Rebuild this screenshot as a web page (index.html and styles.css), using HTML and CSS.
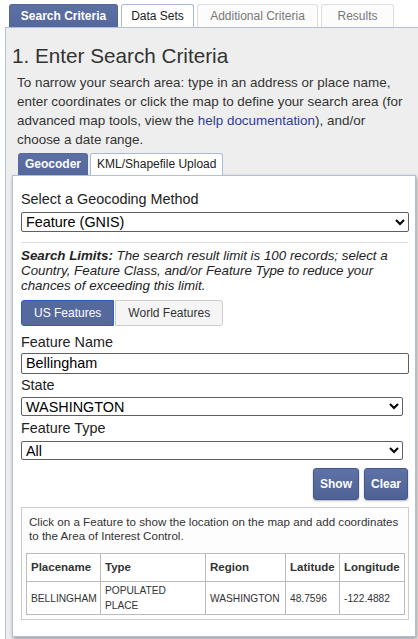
FILE: index.html
```html
<!DOCTYPE html>
<html lang="en">
<head>
<meta charset="utf-8">
<title>Enter Search Criteria</title>
<link rel="stylesheet" href="styles.css">
</head>
<body>
<div class="page">
  <nav class="tabs">
    <span class="tab tab-active tab-search">Search Criteria</span>
    <span class="tab tab-open tab-data">Data Sets</span>
    <span class="tab tab-disabled tab-additional">Additional Criteria</span>
    <span class="tab tab-disabled tab-results">Results</span>
  </nav>
  <section class="panel">
    <h1 class="title">1. Enter Search Criteria</h1>
    <p class="intro">To narrow your search area: type in an address or place name, enter coordinates or click the map to define your search area (for advanced map tools, view the <a class="link" href="#">help documentation</a>), and/or choose a date range.</p>
    <div class="subtabs">
      <span class="subtab subtab-active">Geocoder</span>
      <span class="subtab">KML/Shapefile Upload</span>
    </div>
    <div class="card">
      <div class="field">
        <label class="field-label">Select a Geocoding Method</label>
        <select class="select select-method"><option>Feature (GNIS)</option></select>
      </div>
      <hr class="divider">
      <p class="limits"><b>Search Limits:</b> The search result limit is 100 records; select a Country, Feature Class, and/or Feature Type to reduce your chances of exceeding this limit.</p>
      <div class="seg-group">
        <button class="seg seg-active" type="button">US Features</button>
        <button class="seg seg-plain" type="button">World Features</button>
      </div>
      <div class="field field-name">
        <label class="field-label">Feature Name</label>
        <input class="text-input" type="text" value="Bellingham">
      </div>
      <div class="field field-state">
        <label class="field-label">State</label>
        <select class="select select-narrow"><option>WASHINGTON</option></select>
      </div>
      <div class="field field-type">
        <label class="field-label">Feature Type</label>
        <select class="select select-narrow"><option>All</option></select>
      </div>
      <div class="actions">
        <button class="action" type="button">Show</button>
        <button class="action" type="button">Clear</button>
      </div>
      <div class="results">
        <p class="results-note">Click on a Feature to show the location on the map and add coordinates to the Area of Interest Control.</p>
        <table class="results-table">
          <thead>
            <tr>
              <th class="col-place">Placename</th>
              <th class="col-type">Type</th>
              <th class="col-region">Region</th>
              <th class="col-lat">Latitude</th>
              <th class="col-lon">Longitude</th>
            </tr>
          </thead>
          <tbody>
            <tr>
              <td>BELLINGHAM</td>
              <td class="cell-type">POPULATED PLACE</td>
              <td>WASHINGTON</td>
              <td>48.7596</td>
              <td>-122.4882</td>
            </tr>
          </tbody>
        </table>
      </div>
    </div>
  </section>
</div>
</body>
</html>
```
FILE: styles.css
```css
html, body {
  margin: 0;
  padding: 0;
  overflow: hidden;
  background: #ffffff;
}

body {
  font-family: "Liberation Sans", Arial, sans-serif;
  color: #333333;
}

.page {
  padding: 4px 0 0 5px;
}

/* top tabs */
.tabs {
  display: flex;
  gap: 3px;
  padding-left: 4px;
  height: 23px;
}

.tab {
  box-sizing: border-box;
  height: 23px;
  line-height: 22px;
  font-size: 12px;
  text-align: center;
  border: 1px solid #dddddd;
  border-bottom: none;
  border-radius: 3px 3px 0 0;
  background: #fcfcfc;
  color: #777777;
}

.tab-search { width: 109px; }
.tab-data { width: 73px; }
.tab-additional { width: 121px; }
.tab-results { width: 73px; }

.tab-active {
  background: linear-gradient(#5d70a3, #55689b);
  border-color: #52659a;
  color: #ffffff;
  font-weight: bold;
}

.tab-open {
  background: #ffffff;
  border-color: #a9bad8;
  color: #222222;
}

/* main panel */
.panel {
  margin-right: -6px;
  padding: 0 7px 40px 6px;
  background: #eeeeee;
  border: 1px solid #afc0dc;
}

.title {
  margin: 16px 0 0 0;
  font-size: 20.7px;
  line-height: 24px;
  font-weight: normal;
  color: #333333;
}

.intro {
  margin: 5px 0 0 0;
  padding: 0 6px 0 5px;
  font-size: 13.45px;
  line-height: 19px;
  color: #333333;
}

.link {
  color: #2f3a9e;
  text-decoration: none;
}

/* sub tabs */
.subtabs {
  display: flex;
  gap: 2px;
  margin: 4px 0 0 6px;
  height: 22px;
}

.subtab {
  box-sizing: border-box;
  height: 22px;
  padding: 0 6px;
  line-height: 20px;
  font-size: 12px;
  border: 1px solid #a9bad8;
  border-bottom: none;
  border-radius: 3px 3px 0 0;
  background: #ffffff;
  color: #222222;
}

.subtab-active {
  background: linear-gradient(#5d70a3, #55689b);
  border-color: #55689b;
  color: #ffffff;
  font-weight: bold;
}

/* card */
.card {
  background: #ffffff;
  border: 1px solid #afc0dc;
  padding: 15px 6px 16px 8px;
  box-shadow: 1px 2px 4px rgba(0, 0, 0, 0.35);
}

.field {
  display: flex;
  flex-direction: column;
  gap: 4px;
}

.field-label {
  font-size: 14.4px;
  line-height: 16.5px;
  color: #222222;
}

.select {
  box-sizing: border-box;
  height: 20px;
  padding: 0;
  font-family: "Liberation Sans", Arial, sans-serif;
  font-size: 14.4px;
  color: #000000;
  background: #ffffff;
  border: 1px solid #5f5f5f;
  border-radius: 2px;
}

.select-method {
  width: 100%;
}

.select-narrow {
  width: calc(100% - 6px);
  height: 19px;
}

.divider {
  border: 0;
  border-top: 1px solid #dddddd;
  margin: 10px 1px 5px 0;
}

.limits {
  margin: 0;
  font-size: 13.33px;
  line-height: 15.3px;
  font-style: italic;
  color: #222222;
}

.seg-group {
  display: flex;
  margin-top: 7px;
}

.seg {
  box-sizing: border-box;
  height: 26px;
  padding: 0 12px;
  font-family: "Liberation Sans", Arial, sans-serif;
  font-size: 12px;
}

.seg-active {
  background: #56699c;
  color: #ffffff;
  border: 1px solid #2f5bd0;
  border-radius: 3px 0 0 3px;
}

.seg-plain {
  margin-left: 1px;
  background: #f5f5f5;
  color: #333333;
  border: 1px solid #cccccc;
  border-radius: 0 3px 3px 0;
}

.field-name {
  margin-top: 8px;
  gap: 2px;
}

.field-state {
  margin-top: 3px;
}

.field-type {
  margin-top: 4px;
}

.text-input {
  box-sizing: border-box;
  width: 100%;
  height: 21px;
  padding: 0 4px;
  font-family: "Liberation Sans", Arial, sans-serif;
  font-size: 14.4px;
  color: #000000;
  border: 1px solid #5f5f5f;
  border-radius: 2px;
  margin-right: 1px;
}

.actions {
  display: flex;
  justify-content: flex-end;
  gap: 5px;
  margin-top: 8px;
  padding-right: 1px;
}

.action {
  box-sizing: border-box;
  height: 32px;
  padding: 0 6px;
  font-family: "Liberation Sans", Arial, sans-serif;
  font-size: 12px;
  font-weight: bold;
  color: #ffffff;
  background: linear-gradient(#5f72a5, #4f6296);
  border: 1px solid #44578b;
  border-radius: 3px;
  box-shadow: 0 1px 2px rgba(0, 0, 0, 0.3);
}

/* results */
.results {
  margin-top: 7px;
  padding: 7px 3px 4px 4px;
  border: 1px solid #cccccc;
  background: #fdfdfd;
}

.results-note {
  margin: 0 0 10px 0;
  padding: 0 3px;
  font-size: 11.6px;
  line-height: 14px;
  color: #333333;
}

.results-table {
  width: 100%;
  table-layout: fixed;
  border-collapse: collapse;
  border: 1px solid #b5b5b5;
  background: #ffffff;
}

.results-table th,
.results-table td {
  box-sizing: border-box;
  border: 1px solid #bbbbbb;
  text-align: left;
  color: #333333;
}

.results-table th {
  padding: 6px 4px;
  font-size: 11.5px;
  line-height: 15px;
  font-weight: bold;
}

.results-table td {
  padding: 1px 4px;
  font-size: 10.2px;
  line-height: 15.3px;
  vertical-align: middle;
}

.results-table td.cell-type {
  padding-right: 12px;
}

.col-place { width: 74px; }
.col-type { width: 105px; }
.col-region { width: 80px; }
.col-lat { width: 54px; }
.col-lon { width: 65px; }
```
